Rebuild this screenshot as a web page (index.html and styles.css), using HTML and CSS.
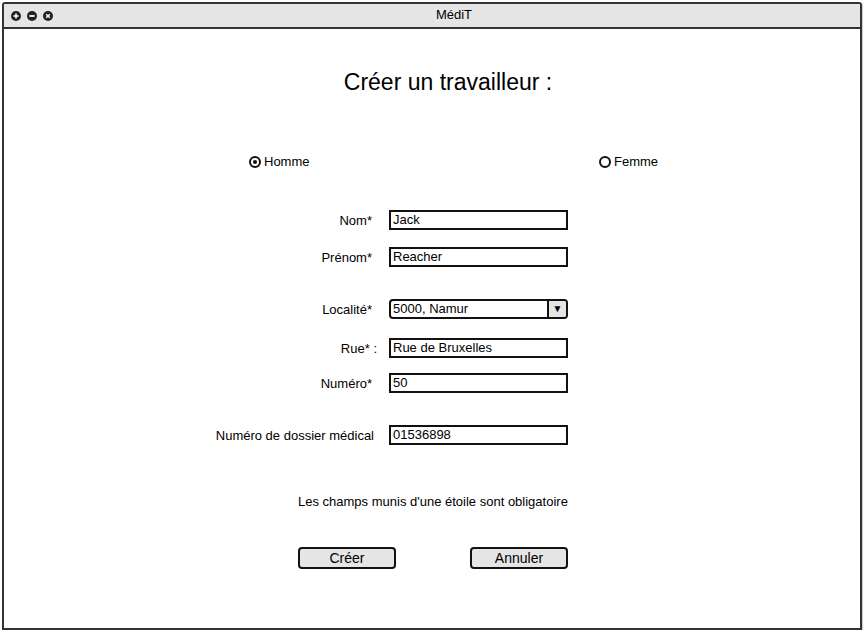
FILE: index.html
```html
<!DOCTYPE html>
<html lang="fr">
<head>
<meta charset="utf-8">
<title>MédiT</title>
<link rel="stylesheet" href="styles.css">
</head>
<body>
<div class="window">
  <div class="titlebar">
    <div class="controls">
      <svg class="ctl" viewBox="0 0 10 10"><circle cx="5" cy="5" r="5" fill="#222"/><path d="M5 2.4v5.2M2.4 5h5.2" stroke="#fff" stroke-width="1.6"/></svg>
      <svg class="ctl" viewBox="0 0 10 10"><circle cx="5" cy="5" r="5" fill="#222"/><path d="M2.4 5h5.2" stroke="#fff" stroke-width="1.8"/></svg>
      <svg class="ctl" viewBox="0 0 10 10"><circle cx="5" cy="5" r="5" fill="#222"/><path d="M3.2 3.2l3.6 3.6M6.8 3.2l-3.6 3.6" stroke="#fff" stroke-width="1.4"/></svg>
    </div>
    <div class="wtitle">MédiT</div>
  </div>
  <div class="content">
    <h1 class="heading">Créer un travailleur :</h1>
    <div class="radios">
      <label class="radio radio-first"><span class="dot checked"></span>Homme</label>
      <label class="radio"><span class="dot"></span>Femme</label>
    </div>
    <div class="form">
      <div class="row r-nom"><span class="lbl">Nom*</span><span class="field">Jack</span></div>
      <div class="row r-prenom"><span class="lbl">Prénom*</span><span class="field">Reacher</span></div>
      <div class="row r-loc"><span class="lbl">Localité*</span><span class="field select"><span class="sel-text">5000, Namur</span><span class="sel-btn">▼</span></span></div>
      <div class="row r-rue"><span class="lbl lbl-rue">Rue* :</span><span class="field">Rue de Bruxelles</span></div>
      <div class="row r-num"><span class="lbl">Numéro*</span><span class="field">50</span></div>
      <div class="row r-dos"><span class="lbl lbl-dos">Numéro de dossier médical</span><span class="field">01536898</span></div>
    </div>
    <p class="note">Les champs munis d'une étoile sont obligatoire</p>
    <div class="buttons">
      <button class="btn">Créer</button>
      <button class="btn">Annuler</button>
    </div>
  </div>
</div>
</body>
</html>
```
FILE: styles.css
```css
* { box-sizing: border-box; }
html, body { margin: 0; padding: 0; background: #fff; }
body {
  font-family: "Liberation Sans", Arial, sans-serif;
  font-size: 13px;
  color: #000;
}
.window {
  margin: 2px 0 0 2px;
  width: 860px;
  height: 628px;
  border: 2px solid #333;
  border-radius: 3px 3px 0 0;
  background: #fff;
  box-shadow: 1px 1px 1px #ccc;
  display: flex;
  flex-direction: column;
}
.titlebar {
  height: 25px;
  background: #e5e5e5;
  border-bottom: 2px solid #333;
  display: flex;
  align-items: center;
  position: relative;
}
.controls {
  display: flex;
  gap: 6px;
  padding-left: 7px;
}
.ctl { width: 10px; height: 10px; display: block; }
.wtitle {
  position: absolute;
  left: 0; right: 0; top: 0;
  line-height: 22px;
  text-align: center;
  padding-left: 44px;
  font-size: 13px;
}
.content {
  flex: 1;
  display: flex;
  flex-direction: column;
}
.heading {
  margin: 40px 0 0 0;
  font-weight: normal;
  font-size: 23px;
  line-height: 26px;
  text-align: center;
  padding-left: 32px;
}
.radios {
  margin-top: 59px;
  display: flex;
  padding-left: 245px;
  line-height: 16px;
}
.radio { display: flex; align-items: center; }
.radio-first { width: 350px; }
.dot {
  width: 12px; height: 12px;
  border: 2px solid #111;
  border-radius: 50%;
  margin-right: 3px;
  display: flex;
  align-items: center;
  justify-content: center;
  background: #fff;
}
.dot.checked::after {
  content: "";
  width: 4px; height: 4px;
  border-radius: 50%;
  background: #111;
}
.form {
  margin: 40px 0 0 196px;
  display: flex;
  flex-direction: column;
}
.row {
  display: grid;
  grid-template-columns: 172px 179px;
  column-gap: 17px;
  align-items: center;
  height: 20px;
}
.r-prenom { margin-top: 17px; }
.r-loc { margin-top: 32px; }
.r-rue { margin-top: 19px; }
.r-num { margin-top: 15px; }
.r-dos { margin-top: 32px; }
.lbl { text-align: right; white-space: nowrap; }
.lbl-rue { margin-right: -5px; }
.lbl-dos { margin-right: -2px; }
.field {
  height: 20px;
  border: 2px solid #111;
  background: #fff;
  padding-left: 2px;
  line-height: 16px;
  white-space: nowrap;
}
.select {
  display: flex;
  border-radius: 4px;
  padding-left: 0;
  overflow: hidden;
}
.sel-text { flex: 1; padding-left: 2px; }
.sel-btn {
  width: 19px;
  border-left: 2px solid #111;
  background: #e5e5e5;
  font-size: 10px;
  text-align: center;
  line-height: 16px;
}
.note {
  margin: 49px 0 0 294px;
  line-height: 16px;
}
.buttons {
  margin: 37px 0 0 294px;
  display: flex;
  gap: 74px;
}
.btn {
  width: 98px;
  height: 22px;
  border: 2px solid #111;
  border-radius: 4px;
  background: #e5e5e5;
  font-family: "Liberation Sans", Arial, sans-serif;
  font-size: 14px;
  line-height: 16px;
  padding: 0;
  color: #000;
}
```
